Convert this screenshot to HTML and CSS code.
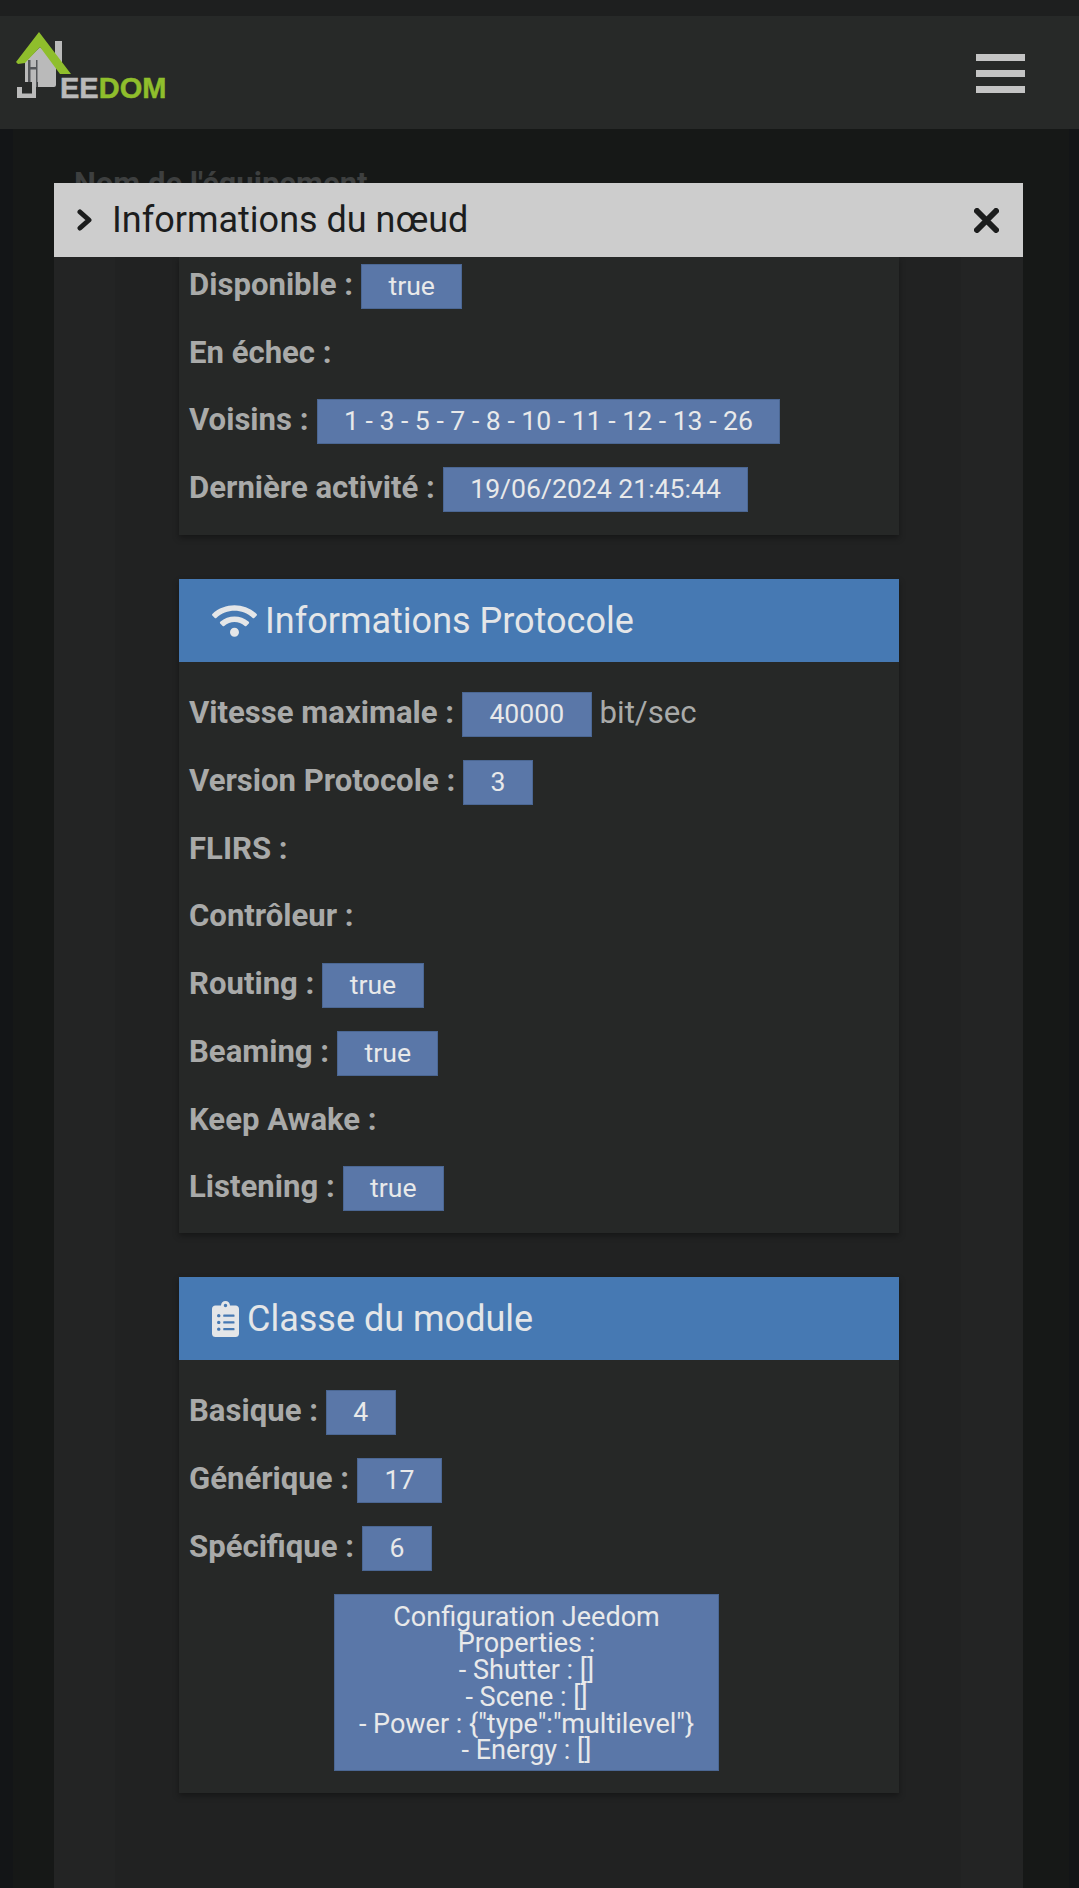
FILE: index.html
```html
<!DOCTYPE html>
<html lang="fr">
<head>
    <meta charset="UTF-8">
    <meta name="viewport" content="width=device-width, initial-scale=1.0">
    <title>Informations du nœud</title>
    <link rel="stylesheet" href="styles.css">
</head>
<body>
    <div class="topbar"></div>
    <nav class="navbar">
        <svg class="logo" viewBox="0 30 180 80" width="180" height="80">
            <!-- house -->
            <rect class="logo-grey" x="55" y="41" width="7" height="26"/>
            <path class="logo-grey" d="M25 62 L40 47 L56 62 V85 Q56 87 54 87 H38 V82 H25 Z"/>
            <rect class="logo-dark" x="28" y="60" width="2.5" height="22"/>
            <rect class="logo-dark" x="36" y="60" width="1.5" height="27"/>
            <rect class="logo-dark" x="30" y="67" width="7" height="2.5"/>
            <path class="logo-grey" d="M32 70 H36 V98 H17 V87 H22 V93.5 H32 Z"/>
            <path class="logo-green" d="M16 62 L39 32 L71 74 L60 74 L40 47 L25 63 L18 64 Z"/>
            <text class="logo-text" x="60" y="98">EE<tspan class="logo-text-green">DOM</tspan></text>
        </svg>
        <div class="hamburger">
            <span></span>
            <span></span>
            <span></span>
        </div>
    </nav>
    <div class="page">
        <div class="page-label">Nom de l'équipement</div>
    </div>

    <div class="modal">
        <div class="modal-header">
            <svg class="modal-chevron" viewBox="0 0 15 22" width="15" height="22">
                <path d="M3 3 L12 11 L3 19"/>
            </svg>
            <span class="modal-title">Informations du nœud</span>
            <svg class="modal-close" viewBox="0 0 25 25" width="25" height="25">
                <path d="M3 3 L22 22 M22 3 L3 22"/>
            </svg>
        </div>
        <div class="modal-body">
            <div class="modal-inner">
                <section class="panel panel-first">
                    <div class="panel-body">
                        <div class="row"><span class="label">Disponible :</span><span class="badge">true</span></div>
                        <div class="row"><span class="label">En échec :</span></div>
                        <div class="row"><span class="label">Voisins :</span><span class="badge">1 - 3 - 5 - 7 - 8 - 10 - 11 - 12 - 13 - 26</span></div>
                        <div class="row"><span class="label">Dernière activité :</span><span class="badge">19/06/2024 21:45:44</span></div>
                    </div>
                </section>

                <section class="panel">
                    <h3 class="panel-heading">
                        <svg class="icon-wifi" viewBox="0 0 640 512" width="45" height="36">
                            <path d="M634.91 154.88C457.74-8.99 182.19-8.93 5.09 154.88c-6.66 6.16-6.79 16.59-.35 22.98l34.24 33.97c6.14 6.1 16.02 6.23 22.4.38 145.92-133.68 371.3-133.71 517.25 0 6.38 5.85 16.26 5.71 22.4-.38l34.24-33.97c6.43-6.39 6.3-16.82-.36-22.98zM320 352c-35.35 0-64 28.65-64 64s28.65 64 64 64 64-28.65 64-64-28.65-64-64-64zm202.67-83.59c-115.26-101.93-290.21-101.82-405.34 0-6.9 6.1-7.12 16.69-.57 23.15l34.44 33.99c6 5.92 15.66 6.32 22.05.8 83.95-72.57 209.74-72.41 293.49 0 6.39 5.52 16.05 5.13 22.05-.8l34.44-33.99c6.56-6.46 6.33-17.06-.56-23.15z"/>
                        </svg>
                        Informations Protocole
                    </h3>
                    <div class="panel-body">
                        <div class="row"><span class="label">Vitesse maximale :</span><span class="badge">40000</span><span class="unit">bit/sec</span></div>
                        <div class="row"><span class="label">Version Protocole :</span><span class="badge">3</span></div>
                        <div class="row"><span class="label">FLIRS :</span></div>
                        <div class="row"><span class="label">Contrôleur :</span></div>
                        <div class="row"><span class="label">Routing :</span><span class="badge">true</span></div>
                        <div class="row"><span class="label">Beaming :</span><span class="badge">true</span></div>
                        <div class="row"><span class="label">Keep Awake :</span></div>
                        <div class="row"><span class="label">Listening :</span><span class="badge">true</span></div>
                    </div>
                </section>

                <section class="panel">
                    <h3 class="panel-heading">
                        <svg class="icon-clipboard" viewBox="0 0 384 512" width="27" height="36">
                            <path d="M336 64h-80c0-35.3-28.7-64-64-64s-64 28.7-64 64H48C21.5 64 0 85.5 0 112v352c0 26.5 21.5 48 48 48h288c26.5 0 48-21.5 48-48V112c0-26.5-21.5-48-48-48zM96 424c-13.3 0-24-10.7-24-24s10.7-24 24-24 24 10.7 24 24-10.7 24-24 24zm0-96c-13.3 0-24-10.7-24-24s10.7-24 24-24 24 10.7 24 24-10.7 24-24 24zm0-96c-13.3 0-24-10.7-24-24s10.7-24 24-24 24 10.7 24 24-10.7 24-24 24zm96-192c13.3 0 24 10.7 24 24s-10.7 24-24 24-24-10.7-24-24 10.7-24 24-24zm128 368c0 4.4-3.6 8-8 8H168c-4.4 0-8-3.6-8-8v-16c0-4.4 3.6-8 8-8h144c4.4 0 8 3.6 8 8v16zm0-96c0 4.4-3.6 8-8 8H168c-4.4 0-8-3.6-8-8v-16c0-4.4 3.6-8 8-8h144c4.4 0 8 3.6 8 8v16zm0-96c0 4.4-3.6 8-8 8H168c-4.4 0-8-3.6-8-8v-16c0-4.4 3.6-8 8-8h144c4.4 0 8 3.6 8 8v16z"/>
                        </svg>
                        Classe du module
                    </h3>
                    <div class="panel-body">
                        <div class="row"><span class="label">Basique :</span><span class="badge">4</span></div>
                        <div class="row"><span class="label">Générique :</span><span class="badge">17</span></div>
                        <div class="row"><span class="label">Spécifique :</span><span class="badge">6</span></div>
                        <div class="config">
                            Configuration Jeedom<br>
                            Properties :<br>
                            - Shutter : []<br>
                            - Scene : []<br>
                            - Power : {"type":"multilevel"}<br>
                            - Energy : []
                        </div>
                    </div>
                </section>
            </div>
        </div>
    </div>
</body>
</html>
```

FILE: styles.css
```css
* {
    box-sizing: border-box;
}
html, body {
    height: 100%;
}
body {
    margin: 0;
    overflow: hidden;
    background-color: #161817;
    font-family: Roboto, "Liberation Sans", sans-serif;
}
.topbar {
    height: 16px;
    background-color: #1e1f1f;
}
.navbar {
    height: 113px;
    background-color: #272928;
    display: flex;
    justify-content: space-between;
    align-items: flex-start;
    padding: 0 53px 0 0;
}
.logo {
    margin-top: 14px;
    display: block;
}
.logo-green {
    fill: #8fbe2c;
}
.logo-grey {
    fill: #bababa;
}
.logo-dark {
    fill: #55575a;
}
.logo-text {
    font-family: "Liberation Sans", sans-serif;
    font-weight: bold;
    font-size: 29px;
    fill: #bababa;
    stroke: #bababa;
    stroke-width: 0.5;
}
.logo-text-green {
    fill: #8fbe2c;
    stroke: #8fbe2c;
}
.hamburger {
    margin-top: 38px;
    width: 49px;
    margin-right: 1px;
}
.hamburger span {
    display: block;
    height: 7px;
    margin-bottom: 9px;
    background-color: #c4c4c4;
}
.page {
    height: 1759px;
    border-left: 13px solid #131517;
    border-right: 10px solid #131517;
    padding: 37px 0 0 61px;
}
.page-label {
    font-size: 31px;
    font-weight: bold;
    line-height: 36px;
    color: #3d3f3f;
}
.modal {
    position: absolute;
    left: 54px;
    top: 183px;
    width: 969px;
    height: 1705px;
    display: flex;
    flex-direction: column;
}
.modal-header {
    height: 74px;
    flex-shrink: 0;
    background-color: #cdcdcd;
    color: #1c1d1d;
    display: flex;
    align-items: center;
    padding: 0 24px 0 23px;
}
.modal-chevron {
    fill: none;
    stroke: #1c1d1d;
    stroke-width: 5;
    stroke-linecap: round;
    stroke-linejoin: round;
}
.modal-title {
    margin-left: 20px;
    font-size: 36px;
    flex-grow: 1;
}
.modal-close {
    fill: none;
    stroke: #1c1d1d;
    stroke-width: 6;
    stroke-linecap: round;
}
.modal-body {
    flex-grow: 1;
    overflow: hidden;
    background-color: #232424;
    padding: 0 62px 0 61px;
}
.modal-inner {
    height: 100%;
    background-color: #212222;
    padding: 0 62px 0 64px;
}
.panel {
    background-color: #262827;
    box-shadow: 0 3px 6px rgba(0, 0, 0, 0.35);
    margin-bottom: 44px;
}
.panel-first .panel-body {
    padding-top: 7px;
    padding-bottom: 22.6px;
}
.panel-heading {
    margin: 0;
    height: 83.5px;
    background-color: #4679b3;
    color: #e4e6e8;
    font-size: 36px;
    font-weight: normal;
    display: flex;
    align-items: center;
    gap: 8px;
    padding: 1px 0 0 33px;
}
.panel-heading svg {
    fill: #e4e6e8;
}
.panel-body {
    padding: 29.3px 10px 22px;
    color: #a9aaa9;
}
.row {
    display: flex;
    align-items: baseline;
    gap: 8px;
    min-height: 44.4px;
    margin-bottom: 23px;
}
.row:last-child {
    margin-bottom: 0;
}
.label {
    font-size: 31.1px;
    font-weight: bold;
    line-height: 41px;
}
.badge {
    height: 45px;
    line-height: 42px;
    padding: 0 26.4px;
    font-size: 26.6px;
    color: #e8e9ea;
    background-color: #5a77a8;
    border: 1px solid #4b6793;
}
.unit {
    font-size: 31.2px;
}
.config {
    width: 385px;
    margin: 0 0 0 145px;
    padding: 9px 0 6.3px;
    font-size: 27px;
    line-height: 26.7px;
    text-align: center;
    color: #e8e9ea;
    background-color: #5a77a8;
    border: 1px solid #4b6793;
}
```
